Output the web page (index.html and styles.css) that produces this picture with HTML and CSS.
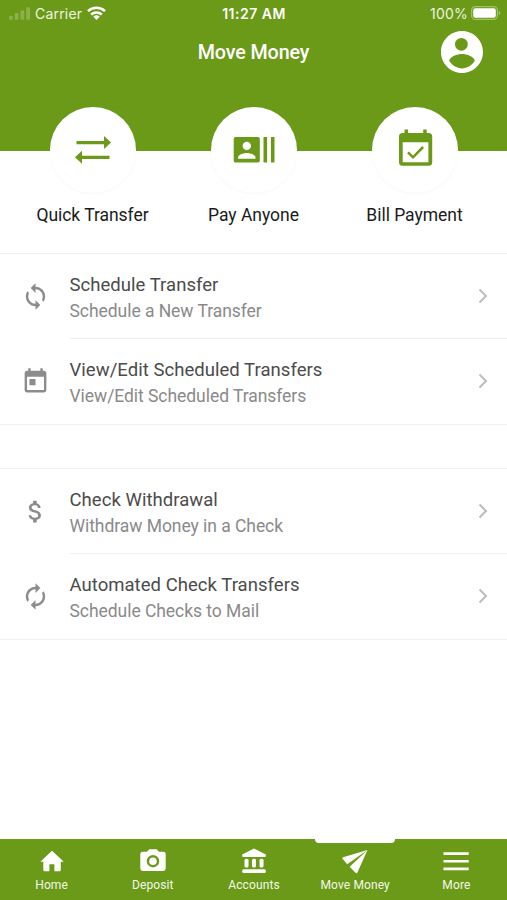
FILE: index.html
```html
<!DOCTYPE html>
<html lang="en">
<head>
<meta charset="utf-8">
<title>Move Money</title>
<link rel="stylesheet" href="styles.css">
</head>
<body>
<div class="app">
  <header class="header">
    <div class="status">
      <div class="status-left">
        <svg class="signal" viewBox="0 0 22 13"><rect x="0" y="9" width="4" height="4" rx="1"/><rect x="6" y="6" width="4" height="7" rx="1"/><rect x="12" y="3" width="4" height="10" rx="1"/><rect x="18" y="0" width="4" height="13" rx="1"/></svg>
        <span class="carrier">Carrier</span>
        <svg class="wifi" viewBox="0 0 19 14"><g fill="none" stroke="#fff" stroke-width="2.5"><path d="M1 5.1a12.3 12.3 0 0 1 17 0"/><path d="M4.2 8.5a7.8 7.8 0 0 1 10.6 0"/></g><path fill="#fff" d="M6.3 10.7a4.8 4.8 0 0 1 6.4 0L9.5 14z"/></svg>
      </div>
      <span class="clock">11:27 AM</span>
      <div class="status-right">
        <span class="percent">100%</span>
        <svg class="battery" viewBox="0 0 30 14"><rect x=".6" y=".6" width="25.8" height="12.8" rx="3.6" fill="none" stroke="#a2bf6a" stroke-width="1.2"/><rect x="2.2" y="2.2" width="22.6" height="9.6" rx="2" fill="#fff"/><path fill="#a2bf6a" d="M27.7 4.8c2 .7 2 3.7 0 4.4z"/></svg>
      </div>
    </div>
    <div class="titlebar">
      <h1 class="title">Move Money</h1>
      <svg class="avatar" viewBox="2 2 20 20"><path d="M12 2C6.48 2 2 6.48 2 12s4.48 10 10 10 10-4.480 10-10S17.520 2 12 2zm-.3 3.300a3.050 3.050 0 1 1 0 6.100 3.050 3.050 0 0 1 0-6.100zm.3 14.500c-2.500 0-4.900-1.500-6.100-3.600.3-2 3.900-3.200 6.100-3.200s5.800 1.200 6.100 3.200c-1.200 2.100-3.600 3.600-6.100 3.600z"/></svg>
    </div>
  </header>

  <section class="actions">
    <a class="action">
      <span class="disc"><svg class="glyph" viewBox="0 0 86 86"><path d="M26.500 34h27.500v-5l7 6.500-7 6.500v-4.700H26.500zM59.500 48.700H32V43.700l-7 6.500 7 6.500V52h27.500z"/></svg></span>
      <span class="label">Quick Transfer</span>
    </a>
    <a class="action">
      <span class="disc"><svg class="glyph" viewBox="0 0 86 86"><path fill-rule="evenodd" d="M24.500 30h22.500q1.800 0 1.800 1.800v21.900q0 1.800-1.800 1.800H24.500q-1.800 0-1.800-1.800V31.800Q22.700 30 24.500 30zM35.800 34.700a4.200 4.200 0 1 0 0 8.400 4.200 4.200 0 0 0 0-8.400zM27.100 51.800h17.400v-1.500c0-2.900-5.800-4.400-8.700-4.400s-8.700 1.500-8.700 4.400z"/><path d="M52.500 30h3.600v25.500h-3.600zM59.900 30h3.600v25.500h-3.600z"/></svg></span>
      <span class="label">Pay Anyone</span>
    </a>
    <a class="action">
      <span class="disc"><svg class="glyph" viewBox="0 0 86 86"><path fill-rule="evenodd" d="M30.500 26h2v-3.500H36V26h15.200v-3.500h3.500V26h2q3.500 0 3.500 3.500v25.800q0 3.500-3.500 3.500H30.500q-3.500 0-3.500-3.500V29.500Q27 26 30.500 26zm.2 9.200v20h25.700v-20z"/><path fill="none" stroke="#6a9a17" stroke-width="2.500" d="M36 45.300l5 5L51.100 40"/></svg></span>
      <span class="label">Bill Payment</span>
    </a>
  </section>

  <main class="lists">
    <section class="list">
      <a class="row">
        <svg class="row-icon" viewBox="0 0 24 24"><path d="M12 4V1L8 5l4 4V6c3.310 0 6 2.690 6 6 0 1.010-.25 1.970-.7 2.800l1.460 1.460A7.930 7.930 0 0 0 20 12c0-4.420-3.580-8-8-8zm0 14c-3.310 0-6-2.690-6-6 0-1.010.25-1.970.7-2.800L5.240 7.740A7.930 7.930 0 0 0 4 12c0 4.420 3.580 8 8 8v3l4-4-4-4v3z"/></svg>
        <div class="row-body"><div class="text"><div class="name">Schedule Transfer</div><div class="desc">Schedule a New Transfer</div></div><svg class="chevron" viewBox="0 0 10 16"><path d="M1.500 1.500L8 8l-6.500 6.500"/></svg></div>
      </a>
      <a class="row">
        <svg class="row-icon" viewBox="0 0 24 24"><path d="M19 3h-1V1h-2v2H8V1H6v2H5c-1.110 0-1.990.9-1.990 2L3 19c0 1.100.89 2 2 2h14c1.100 0 2-.9 2-2V5c0-1.100-.9-2-2-2zm0 16H5V8h14v11zM7 10h5v5H7z"/></svg>
        <div class="row-body"><div class="text"><div class="name">View/Edit Scheduled Transfers</div><div class="desc">View/Edit Scheduled Transfers</div></div><svg class="chevron" viewBox="0 0 10 16"><path d="M1.500 1.500L8 8l-6.500 6.500"/></svg></div>
      </a>
    </section>
    <section class="list">
      <a class="row">
        <svg class="row-icon" viewBox="0 0 24 24"><path d="M11.800 10.900c-2.270-.59-3-1.200-3-2.150 0-1.090 1.010-1.850 2.700-1.850 1.780 0 2.440.85 2.500 2.100h2.210c-.07-1.720-1.120-3.300-3.210-3.810V3h-3v2.160c-1.940.42-3.500 1.680-3.500 3.610 0 2.310 1.910 3.460 4.700 4.130 2.500.6 3 1.480 3 2.410 0 .69-.49 1.790-2.700 1.790-2.060 0-2.870-.92-2.980-2.100h-2.200c.12 2.190 1.760 3.420 3.680 3.830V21h3v-2.150c1.950-.37 3.500-1.500 3.500-3.550 0-2.840-2.430-3.810-4.700-4.400z"/></svg>
        <div class="row-body"><div class="text"><div class="name">Check Withdrawal</div><div class="desc">Withdraw Money in a Check</div></div><svg class="chevron" viewBox="0 0 10 16"><path d="M1.500 1.500L8 8l-6.500 6.500"/></svg></div>
      </a>
      <a class="row">
        <svg class="row-icon" viewBox="0 0 24 24"><path d="M12 6v3l4-4-4-4v3c-4.420 0-8 3.580-8 8 0 1.570.46 3.030 1.240 4.260L6.700 14.800A5.870 5.870 0 0 1 6 12c0-3.310 2.690-6 6-6zm6.760 1.740L17.300 9.200c.44.84.7 1.790.7 2.800 0 3.310-2.690 6-6 6v-3l-4 4 4 4v-3c4.420 0 8-3.580 8-8 0-1.570-.46-3.030-1.240-4.260z"/></svg>
        <div class="row-body"><div class="text"><div class="name">Automated Check Transfers</div><div class="desc">Schedule Checks to Mail</div></div><svg class="chevron" viewBox="0 0 10 16"><path d="M1.500 1.500L8 8l-6.500 6.500"/></svg></div>
      </a>
    </section>
  </main>

  <nav class="tabs">
    <a class="tab"><svg class="tab-icon" viewBox="0 0 28 28"><path d="M11.400 24.200v-7h5v7h5.300q1.100 0 1.100-1.100v-8.400h3L14 3.800 2.300 14.700h3v8.400q0 1.100 1.100 1.100z"/></svg><span>Home</span></a>
    <a class="tab"><svg class="tab-icon" viewBox="0 0 28 28"><path fill-rule="evenodd" d="M10.300 2.200h7.400L20 4.700h4.300q2.400 0 2.400 2.400v14.500q0 2.400-2.400 2.400H3.700q-2.400 0-2.400-2.400V7.100q0-2.400 2.400-2.400H8zM14 8a6.200 6.200 0 1 0 0 12.400A6.200 6.200 0 0 0 14 8zm0 2.400a3.800 3.800 0 1 1 0 7.600 3.800 3.800 0 0 1 0-7.600z"/></svg><span>Deposit</span></a>
    <a class="tab"><svg class="tab-icon" viewBox="0 0 28 28"><path d="M14 1.500L25.800 7.500v1.400q0 1-1 1H3.200q-1 0-1-1V7.500z"/><rect x="4.500" y="11.800" width="4" height="8.700" rx="1.500"/><rect x="12" y="11.800" width="4" height="8.700" rx="1.500"/><rect x="19.500" y="11.800" width="4" height="8.700" rx="1.500"/><rect x="2.200" y="22.300" width="23.600" height="3.800" rx="1.500"/></svg><span>Accounts</span></a>
    <a class="tab active"><svg class="tab-icon" viewBox="0 0 28 28"><path d="M26.500 3L2 10.300q-1 .5-.5 1.500l4.700 5.500zM26.500 3L8.700 19.800l5.800 5.900q1.200 1 1.900-.3z"/></svg><span>Move Money</span></a>
    <a class="tab"><svg class="tab-icon" viewBox="0 0 28 28"><path d="M1.500 5.200h25.200v2.700H1.500zM1.500 12.900h25.200v2.700H1.500zM1.500 20.500h25.200v2.700H1.500z"/></svg><span>More</span></a>
  </nav>
</div>
</body>
</html>
```

FILE: styles.css
```css
* { box-sizing: border-box; }
body { margin: 0; font-family: Roboto, "Liberation Sans", sans-serif; background: #fff; }
svg { display: block; flex: none; }
.app { width: 507px; height: 900px; display: flex; flex-direction: column; overflow: hidden; background: #fff; }
.header { height: 151px; flex: none; background: #6a9a17; color: #fff; }
.status { height: 28px; display: grid; grid-template-columns: 1fr auto 1fr; align-items: center; padding: 0 6px 2px 9px; font-family: Inter, sans-serif; font-size: 14px; color: #eef4e0; }
.status-left, .status-right { display: flex; align-items: center; }
.status-right { justify-content: flex-end; gap: 3px; }
.carrier { letter-spacing: .2px; }
.percent { letter-spacing: .2px; }
.signal { width: 21px; height: 13px; fill: #8bb04c; margin-right: 5px; }
.wifi { width: 19px; height: 14px; margin-left: 5px; }
.clock { font-weight: 600; font-size: 14px; letter-spacing: .5px; color: #fff; margin-right: 2px; }
.battery { width: 30px; height: 14px; }
.titlebar { display: grid; grid-template-columns: 1fr auto 1fr; align-items: center; height: 48px; padding: 0 24px; }
.title { grid-column: 2; margin: 1px 0 0; font-size: 19.700px; font-weight: 500; letter-spacing: -.1px; }
.avatar { width: 42px; height: 42px; fill: #fff; justify-self: end; }
.actions { flex: none; height: 103px; padding: 0 12px; display: grid; grid-template-columns: repeat(3, 1fr); border-bottom: 1px solid #f2f2f2; }
.action { display: flex; flex-direction: column; align-items: center; margin-top: -44px; }
.disc { width: 86px; height: 86px; border-radius: 50%; background: #fff; box-shadow: 0 1px 3px rgba(0,0,0,.03); }
.glyph { width: 86px; height: 86px; fill: #6a9a17; }
.label { margin-top: 11px; line-height: 22px; font-size: 17.5px; letter-spacing: -.03px; color: #1b1b1b; white-space: nowrap; }
.lists { flex: 1; display: flex; flex-direction: column; gap: 43px; }
.list { border-bottom: 1px solid #f2f2f2; }
.list + .list { border-top: 1px solid #f2f2f2; }
.row { display: flex; align-items: center; height: 85px; padding-left: 20.500px; }
.row-icon { width: 29px; height: 29px; fill: #8c8c8c; margin-right: 20px; }
.row-body { flex: 1; height: 85px; display: flex; align-items: center; justify-content: space-between; padding-right: 19px; border-bottom: 1px solid #efefef; }
.row:last-child .row-body { border-bottom-color: transparent; }
.text { padding-top: 4px; line-height: 26px; white-space: nowrap; }
.name { font-size: 18.500px; letter-spacing: .04px; color: #4b4b4b; }
.desc { font-size: 17.500px; letter-spacing: -.05px; color: #8a8a8a; }
.chevron { width: 10px; height: 16px; fill: none; stroke: #bdbdbd; stroke-width: 2; }
.tabs { flex: none; height: 61px; padding-left: 1px; background: #6a9a17; display: grid; grid-template-columns: repeat(5, 1fr); color: #f4f8ea; }
.tab { position: relative; display: flex; flex-direction: column; align-items: center; padding-top: 8px; font-size: 12px; line-height: 16px; letter-spacing: .12px; }
.tab-icon { width: 28px; height: 28px; fill: #fff; margin-bottom: 2px; }
.active::before { content: ""; position: absolute; top: 0; left: 50%; width: 80px; height: 4px; margin-left: -40px; background: #fff; border-radius: 0 0 4px 4px; }
```
